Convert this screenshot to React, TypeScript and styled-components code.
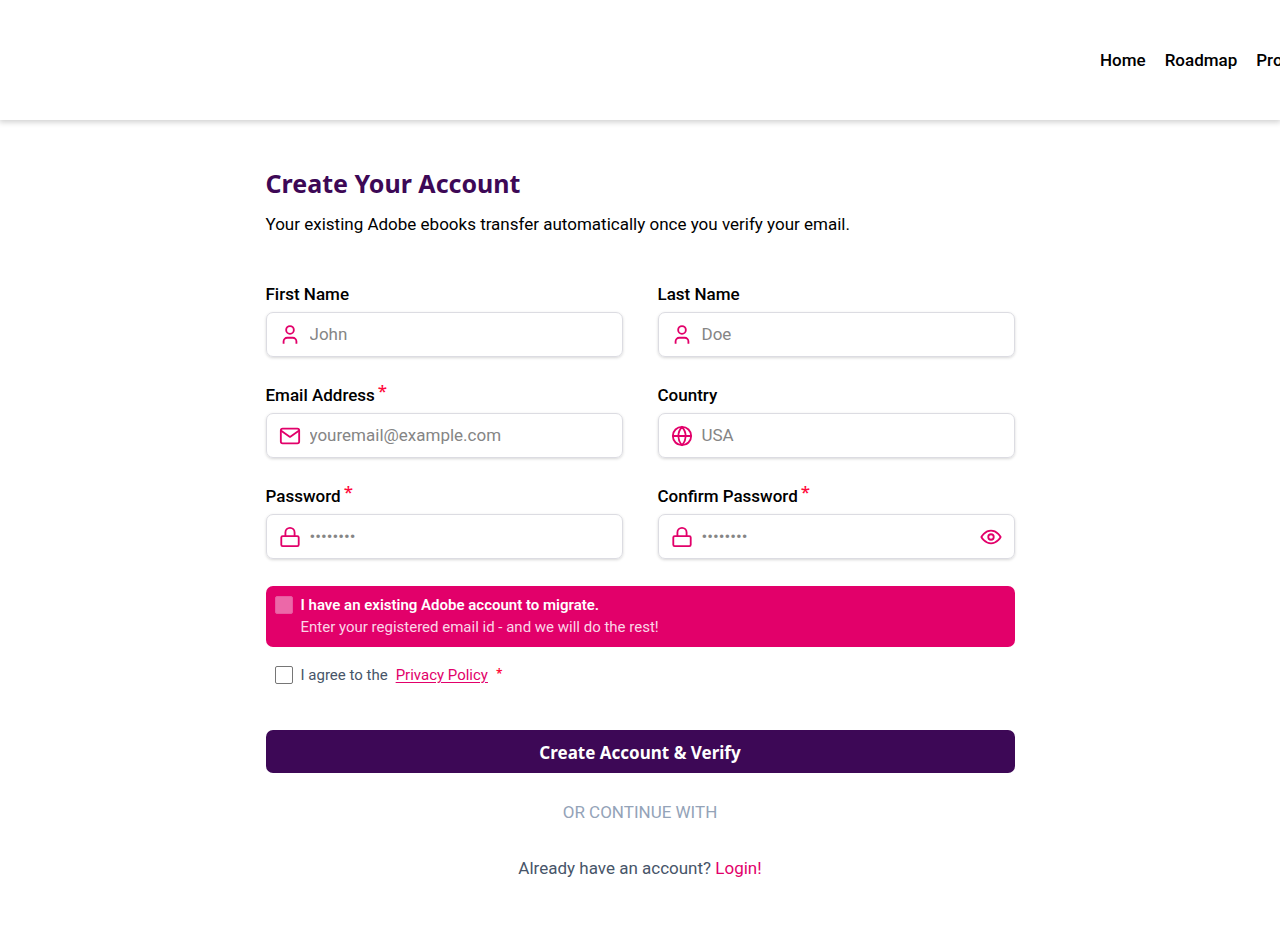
import React, { useState } from "react";
import styled, { createGlobalStyle } from "styled-components";

const pink = "#e2006a";
const purple = "#3d0856";
const bodyFont = `Roboto, "Liberation Sans", sans-serif`;
const headingFont = `"Noto Sans", "Open Sans", sans-serif`;

const GlobalStyle = createGlobalStyle`
  *, *::before, *::after { box-sizing: border-box; }
  body {
    margin: 0;
    background: #fff;
    color: #000;
    font-family: ${bodyFont};
    font-size: 17px;
    line-height: 24px;
  }
`;

const Page = styled.div`
  overflow-x: hidden;
`;

const Header = styled.header`
  display: flex;
  align-items: center;
  justify-content: flex-end;
  height: 120px;
  background: #fff;
  box-shadow: 0 1px 6px 1px rgba(0, 0, 0, 0.2);
`;

const Nav = styled.nav`
  display: flex;
  flex: 0 0 180px;
  gap: 19px;
  overflow: hidden;
  white-space: nowrap;
`;

const NavLink = styled.a`
  color: #000;
  font-weight: 500;
  text-decoration: none;
`;

const Main = styled.main`
  max-width: 781px;
  margin: 0 auto;
  padding: 45px 16px 56px;
`;

const Title = styled.h1`
  margin: 0;
  color: ${purple};
  font-family: ${headingFont};
  font-size: 25px;
  font-weight: 700;
  line-height: 36px;
`;

const Intro = styled.p`
  margin: 11px 0 0;
`;

const Form = styled.form`
  margin-top: 46px;
`;

const Fields = styled.div`
  display: grid;
  grid-template-columns: 1fr 1fr;
  gap: 26px 35px;
`;

const Field = styled.div`
  display: flex;
  flex-direction: column;
  gap: 6px;
`;

const Label = styled.label`
  display: flex;
  gap: 3px;
  font-weight: 500;
`;

const Required = styled.span<{ $small?: boolean }>`
  color: #ff0a3c;
  font-family: ${headingFont};
  font-size: ${(p) => (p.$small ? 12 : 17)}px;
  font-weight: ${(p) => (p.$small ? 600 : 500)};
  line-height: ${(p) => (p.$small ? 20 : 16)}px;
`;

const Control = styled.div`
  display: flex;
  align-items: center;
  gap: 9px;
  height: 45px;
  padding: 0 12px;
  border: 1px solid #dcdce2;
  border-radius: 7px;
  box-shadow: 0 1px 3px rgba(0, 0, 0, 0.16);
  color: ${pink};

  svg { flex: none; }
`;

const Input = styled.input`
  flex: 1;
  min-width: 0;
  height: 24px;
  padding: 0 0 2px;
  border: 0;
  outline: 0;
  background: transparent;
  color: #000;
  font: inherit;

  &::placeholder { color: #858585; opacity: 1; }
`;

const IconButton = styled.button`
  display: flex;
  padding: 0;
  border: 0;
  background: none;
  color: inherit;
  cursor: pointer;
`;

const Checkbox = styled.input<{ $onPink?: boolean }>`
  appearance: none;
  flex: none;
  width: 18px;
  height: 18px;
  margin: 2px 0 0;
  border: 1px solid ${(p) => (p.$onPink ? "#e858a0" : "#767676")};
  border-radius: 2px;
  background: ${(p) => (p.$onPink ? "#ec68a8" : "#fff")};

  &:checked { box-shadow: inset 0 0 0 3px #fff; background: ${purple}; }
`;

const CheckRow = styled.div`
  display: flex;
  gap: 8px;
  padding: 0 9px;
  font-size: 15px;
  line-height: 22px;
`;

const MigrateRow = styled(CheckRow)`
  margin-top: 27px;
  padding-top: 8px;
  padding-bottom: 9px;
  border-radius: 7px;
  background: ${pink};
  color: #fff;
`;

const AgreeRow = styled(CheckRow)`
  margin-top: 17px;
  color: #475569;
`;

const MigrateLabel = styled.label`
  display: flex;
  flex-direction: column;
  color: #fbd5e7;
`;

const Strong = styled.strong`
  color: #fff;
  font-weight: 600;
`;

const Link = styled.a<{ $underlined?: boolean }>`
  color: ${pink};
  text-decoration: ${(p) => (p.$underlined ? "underline" : "none")};
  text-underline-offset: 2px;
`;

const Submit = styled.button`
  display: block;
  width: 100%;
  height: 43px;
  margin-top: 44px;
  padding: 2px 0 0;
  border: 0;
  border-radius: 7px;
  background: ${purple};
  color: #fff;
  font: 700 17px/24px ${headingFont};
  cursor: pointer;
`;

const Divider = styled.p`
  margin: 27px 0 0;
  color: #94a3b8;
  text-align: center;
`;

const LoginPrompt = styled.p`
  margin: 32px 0 0;
  color: #475569;
  text-align: center;
`;

const shapes = {
  user: (
    <>
      <circle cx="12" cy="6.500" r="4.200" />
      <path d="M19 21.500v-2.500a4 4 0 0 0-4-4H9a4 4 0 0 0-4 4v2.500" />
    </>
  ),
  mail: (
    <>
      <rect x="2" y="4" width="20" height="16" rx="2" />
      <path d="m2 6 10 7 10-7" />
    </>
  ),
  globe: (
    <>
      <circle cx="12" cy="12" r="10" />
      <path d="M2 12h20M12 2a15.3 15.3 0 0 1 4 10 15.3 15.3 0 0 1-4 10 15.3 15.3 0 0 1-4-10 15.3 15.3 0 0 1 4-10z" />
    </>
  ),
  lock: (
    <>
      <rect x="2.500" y="11" width="19" height="11" rx="1.500" />
      <path d="M7 11V7a5 5 0 0 1 10 0v4" />
    </>
  ),
  eye: (
    <>
      <path d="M1.500 12S5 5 12 5s10.500 7 10.500 7-3.500 7-10.500 7S1.500 12 1.500 12z" />
      <circle cx="12" cy="12" r="3" />
    </>
  ),
};

type IconName = keyof typeof shapes;

const Icon = ({ name }: { name: IconName }) => (
  <svg width="22" height="22" viewBox="0 0 24 24" fill="none" stroke="currentColor" strokeWidth="2" strokeLinejoin="round" aria-hidden="true">
    {shapes[name]}
  </svg>
);

interface FieldSpec {
  id: string;
  label: string;
  icon: IconName;
  placeholder: string;
  type?: string;
  required?: boolean;
}

const fields: FieldSpec[] = [
  { id: "first-name", label: "First Name", icon: "user", placeholder: "John" },
  { id: "last-name", label: "Last Name", icon: "user", placeholder: "Doe" },
  { id: "email", label: "Email Address", icon: "mail", placeholder: "youremail@example.com", type: "email", required: true },
  { id: "country", label: "Country", icon: "globe", placeholder: "USA" },
  { id: "password", label: "Password", icon: "lock", placeholder: "••••••••", type: "password", required: true },
  { id: "confirm-password", label: "Confirm Password", icon: "lock", placeholder: "••••••••", type: "password", required: true },
];

export default function App() {
  const [visible, setVisible] = useState(false);

  return (
    <Page>
      <GlobalStyle />
      <Header>
        <Nav>
          <NavLink href="#home">Home</NavLink>
          <NavLink href="#roadmap">Roadmap</NavLink>
          <NavLink href="#products">Products</NavLink>
        </Nav>
      </Header>
      <Main>
        <Title>Create Your Account</Title>
        <Intro>Your existing Adobe ebooks transfer automatically once you verify your email.</Intro>
        <Form onSubmit={(e) => e.preventDefault()}>
          <Fields>
            {fields.map((f) => (
              <Field key={f.id}>
                <Label htmlFor={f.id}>
                  {f.label}
                  {f.required && <Required>*</Required>}
                </Label>
                <Control>
                  <Icon name={f.icon} />
                  <Input
                    id={f.id}
                    type={f.type === "password" && visible ? "text" : f.type ?? "text"}
                    placeholder={f.placeholder}
                    required={f.required}
                  />
                  {f.id === "confirm-password" && (
                    <IconButton type="button" aria-label="Show password" onClick={() => setVisible(!visible)}>
                      <Icon name="eye" />
                    </IconButton>
                  )}
                </Control>
              </Field>
            ))}
          </Fields>
          <MigrateRow>
            <Checkbox type="checkbox" id="migrate" $onPink />
            <MigrateLabel htmlFor="migrate">
              <Strong>I have an existing Adobe account to migrate.</Strong>
              <span>Enter your registered email id - and we will do the rest!</span>
            </MigrateLabel>
          </MigrateRow>
          <AgreeRow>
            <Checkbox type="checkbox" id="agree" />
            <label htmlFor="agree">I agree to the</label>
            <Link href="#privacy" $underlined>Privacy Policy</Link>
            <Required $small>*</Required>
          </AgreeRow>
          <Submit type="submit">Create Account &amp; Verify</Submit>
        </Form>
        <Divider>OR CONTINUE WITH</Divider>
        <LoginPrompt>
          Already have an account? <Link href="#login">Login!</Link>
        </LoginPrompt>
      </Main>
    </Page>
  );
}
